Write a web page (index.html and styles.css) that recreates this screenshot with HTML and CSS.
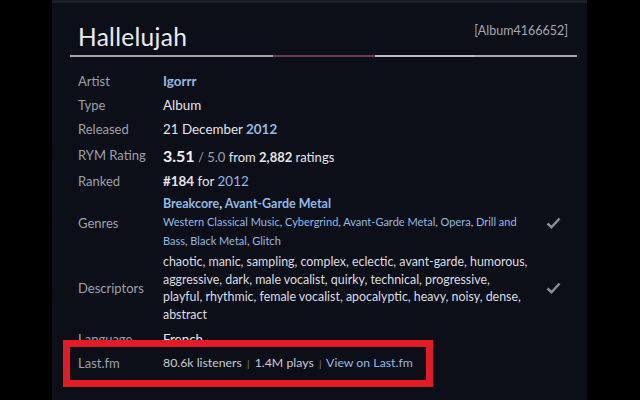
FILE: index.html
```html
<!DOCTYPE html>
<html lang="en">
  <head>
    <meta charset="UTF-8" />
    <title>Hallelujah - Igorrr</title>
    <link rel="stylesheet" href="styles.css">
  </head>

  <body>
    <div class="page">
      <div class="panel">
        <div class="header">
          <h1 class="album-title">Hallelujah</h1>
          <span class="album-id">[Album4166652]</span>
        </div>
        <div class="title-line"></div>

        <div class="info">
          <div class="row">
            <div class="label">Artist</div>
            <div class="value"><a class="link bold">Igorrr</a></div>
          </div>
          <div class="row">
            <div class="label">Type</div>
            <div class="value">Album</div>
          </div>
          <div class="row">
            <div class="label">Released</div>
            <div class="value">21 December <a class="link bold">2012</a></div>
          </div>
          <div class="row rating-row">
            <div class="label">RYM Rating</div>
            <div class="value">
              <span class="avg">3.51</span>
              <span class="muted">/ 5.0</span> from <b>2,882</b> ratings
            </div>
          </div>
          <div class="row">
            <div class="label">Ranked</div>
            <div class="value"><b>#184</b> for <a class="link">2012</a></div>
          </div>
          <div class="row genres-row">
            <div class="label">Genres</div>
            <div class="value">
              <div class="pri-genres">
                <a class="link">Breakcore</a>, <a class="link">Avant-Garde Metal</a>
              </div>
              <div class="sec-genres">
                <a class="link">Western Classical Music</a>, <a class="link">Cybergrind</a>,
                <a class="link">Avant-Garde Metal</a>, <a class="link">Opera</a>,
                <a class="link">Drill and Bass</a>, <a class="link">Black Metal</a>,
                <a class="link">Glitch</a>
              </div>
            </div>
            <div class="vote">
              <svg width="15" height="12" viewBox="0 0 15 12">
                <path d="M1.5 6.5 L5.5 10.2 L13.5 1.5" fill="none" stroke="#8b8e95" stroke-width="2.4" />
              </svg>
            </div>
          </div>
          <div class="row desc-row">
            <div class="label">Descriptors</div>
            <div class="value descriptors">
              chaotic, manic, sampling, complex, eclectic, avant-garde, humorous,
              aggressive, dark, male vocalist, quirky, technical, progressive,
              playful, rhythmic, female vocalist, apocalyptic, heavy, noisy, dense,
              abstract
            </div>
            <div class="vote">
              <svg width="15" height="12" viewBox="0 0 15 12">
                <path d="M1.5 6.5 L5.5 10.2 L13.5 1.5" fill="none" stroke="#8b8e95" stroke-width="2.4" />
              </svg>
            </div>
          </div>
          <div class="row">
            <div class="label">Language</div>
            <div class="value">French</div>
          </div>
          <div class="row lastfm-row">
            <div class="label">Last.fm</div>
            <div class="value lastfm">
              80.6k listeners <span class="sep">|</span> 1.4M plays
              <span class="sep">|</span> <a class="link">View on Last.fm</a>
            </div>
          </div>
        </div>
      </div>
      <div class="highlight"></div>
    </div>
  </body>
</html>
```

FILE: styles.css
```css
body {
  margin: 0;
  background-color: #000;
  font-family: Lato, "Liberation Sans", Arial, sans-serif;
  color: #e4e5e9;
}

.page {
  position: relative;
  width: 640px;
  height: 400px;
  overflow: hidden;
}

.panel {
  width: 535px;
  height: 400px;
  margin-left: 52px;
  box-sizing: border-box;
  border-top: 3px solid #1b1e2a;
  background-color: #0d0f18;
  padding: 0 10px 0 18px;
}

.header {
  display: flex;
  justify-content: space-between;
  align-items: flex-start;
  padding: 19px 9px 0 8px;
}

.album-title {
  margin: 0;
  font-size: 24.5px;
  line-height: 30px;
  font-weight: 400;
  color: #eaeaee;
  letter-spacing: 0.3px;
}

.album-id {
  font-size: 12.5px;
  line-height: 18px;
  color: #a3a6ae;
}

.title-line {
  height: 2px;
  margin-top: 3px;
  background: linear-gradient(
    to right,
    #a8a0a6 0,
    #a8a0a6 203px,
    #6c3a4c 203px,
    #6c3a4c 305px,
    #bdbcc2 305px,
    #bdbcc2 405px,
    #a9a8ae 405px
  );
}

.info {
  padding-top: 12px;
}

.row {
  display: grid;
  grid-template-columns: 85px 1fr 47px;
  align-items: center;
  padding-left: 8px;
  min-height: 24px;
  font-size: 13.4px;
}

.label {
  color: #9ca0a9;
  font-size: 13px;
}

.value {
  color: #e4e5e9;
}

.link {
  color: #93b9e4;
  text-decoration: none;
}

.bold,
b {
  font-weight: 700;
}

.muted {
  color: #9ca0a9;
}

.rating-row {
  min-height: 28px;
  font-size: 13px;
}

.avg {
  font-size: 16px;
  font-weight: 700;
  color: #f2f2f4;
}

.genres-row {
  padding-top: 2px;
  padding-bottom: 3px;
}

.pri-genres {
  font-size: 12.5px;
  line-height: 17px;
  font-weight: 700;
}

.sec-genres {
  font-size: 11px;
  line-height: 19px;
  color: #c8cad0;
}

.desc-row {
  line-height: 17.7px;
  padding-bottom: 3px;
}

.descriptors {
  font-size: 12.4px;
  color: #dcdde1;
}

.vote {
  display: flex;
  justify-content: center;
}

.lastfm {
  font-size: 12.3px;
  color: #c9cbd1;
}

.sep {
  color: #7d8088;
  font-size: 10px;
  padding: 0 2px;
}

.lastfm-row {
  min-height: 24px;
}

.highlight {
  position: absolute;
  left: 63px;
  top: 340px;
  width: 370px;
  height: 47px;
  box-sizing: border-box;
  border: 7px solid #e31b25;
}
```
